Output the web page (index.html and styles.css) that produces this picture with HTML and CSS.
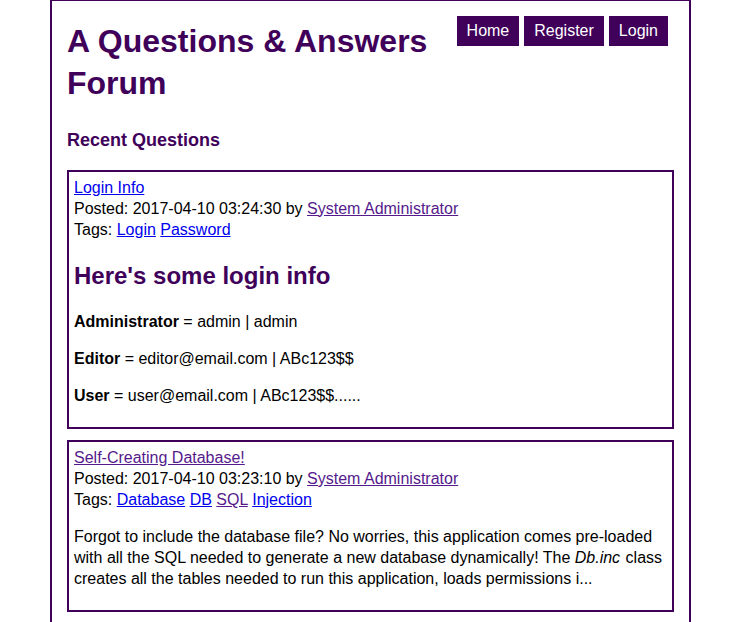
FILE: index.html
```html
<!DOCTYPE html>
<html>
<head>
<meta charset="utf-8">
<title>A Questions &amp; Answers Forum</title>
<link rel="stylesheet" href="styles.css">
</head>
<body>
<div class="page">
  <header class="header">
    <h1 class="site-title">A Questions &amp; Answers Forum</h1>
    <nav class="nav">
      <a class="nav-btn" href="#">Home</a>
      <a class="nav-btn" href="#">Register</a>
      <a class="nav-btn" href="#">Login</a>
    </nav>
  </header>
  <h2 class="section-title">Recent Questions</h2>

  <div class="card">
    <div class="meta">
      <a class="link" href="#">Login Info</a><br>
      Posted: 2017-04-10 03:24:30 by <a class="link visited" href="#">System Administrator</a><br>
      Tags: <a class="link" href="#">Login</a> <a class="link" href="#">Password</a>
    </div>
    <h2 class="q-heading">Here's some login info</h2>
    <p class="q-text"><strong>Administrator</strong> = admin | admin</p>
    <p class="q-text"><strong>Editor</strong> = editor@email.com | ABc123$$</p>
    <p class="q-text"><strong>User</strong> = user@email.com | ABc123$$......</p>
  </div>

  <div class="card">
    <div class="meta">
      <a class="link visited" href="#">Self-Creating Database!</a><br>
      Posted: 2017-04-10 03:23:10 by <a class="link visited" href="#">System Administrator</a><br>
      Tags: <a class="link" href="#">Database</a> <a class="link" href="#">DB</a> <a class="link visited" href="#">SQL</a> <a class="link" href="#">Injection</a>
    </div>
    <p class="q-text">Forgot to include the database file? No worries, this application comes pre-loaded with all the SQL needed to generate a new database dynamically! The <em class="code">Db.inc</em> class creates all the tables needed to run this application, loads permissions i...</p>
  </div>
</div>
</body>
</html>
```
FILE: styles.css
```css
html, body {
  margin: 0;
  padding: 0;
  background: #ffffff;
}

body {
  font-family: "Liberation Sans", Arial, sans-serif;
  font-size: 16px;
  line-height: 21px;
  color: #000000;
}

.page {
  width: 607px;
  margin: -1px auto 0;
  padding: 15px 15px 30px;
  border: 2px solid #40005a;
}

.header {
  display: flex;
  align-items: flex-start;
  justify-content: space-between;
}

.site-title {
  flex: 1;
  margin: 5px 0 0;
  font-size: 32px;
  line-height: 41.6px;
  font-weight: bold;
  color: #40005a;
}

.nav {
  display: flex;
  gap: 5px;
  margin-right: 6px;
}

.nav-btn {
  display: block;
  padding: 5px 10px;
  line-height: 20px;
  background: #40005a;
  color: #ffffff;
  text-decoration: none;
}

.section-title {
  margin: 25px 0 17px;
  font-size: 18px;
  line-height: 23.4px;
  font-weight: bold;
  color: #40005a;
}

.card {
  border: 2px solid #40005a;
  padding: 5px;
  margin-bottom: 11px;
}

.link {
  color: #0000ee;
  text-decoration: underline;
}

.link.visited {
  color: #551a8b;
}

.q-heading {
  margin: 20px 0;
  font-size: 24px;
  line-height: 31.2px;
  font-weight: bold;
  color: #40005a;
}

.q-text {
  margin: 16px 0;
}

.code {
  padding-right: 1px;
}
```
